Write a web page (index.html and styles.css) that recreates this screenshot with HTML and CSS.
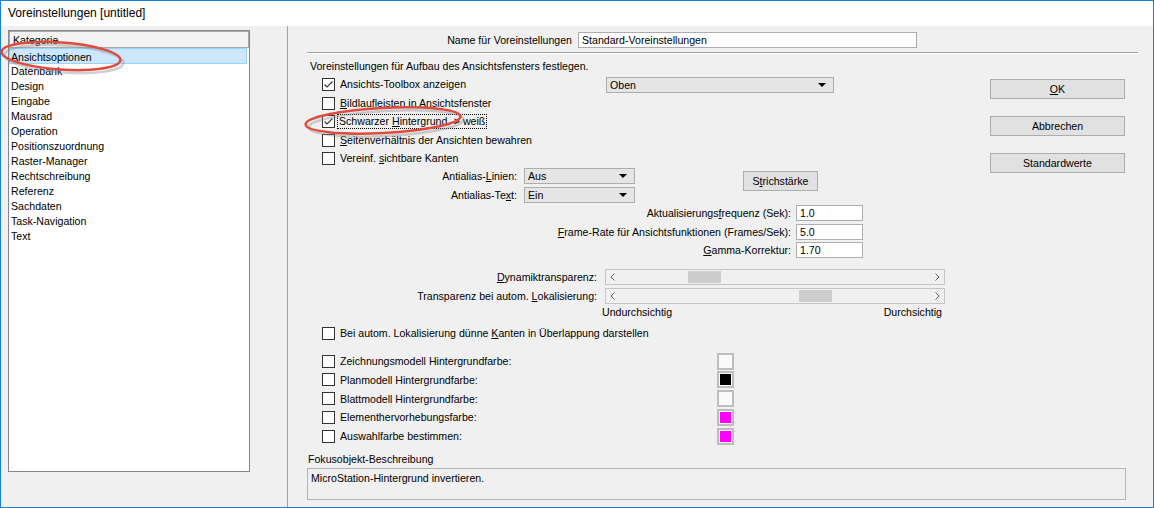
FILE: index.html
```html
<!DOCTYPE html>
<html>
    <head>
        <title>Voreinstellungen</title>
        <link rel="stylesheet" href="styles.css">
    </head>
    <body>
        <div class="window">
            <div class="titlebar">Voreinstellungen [untitled]</div>
            <div class="content">
                <div class="sidebar">
                    <div class="listbox">
                        <div class="list-header">Kategorie</div>
                        <div class="list-item selected">Ansichtsoptionen</div>
                        <div class="list-item">Datenbank</div>
                        <div class="list-item">Design</div>
                        <div class="list-item">Eingabe</div>
                        <div class="list-item">Mausrad</div>
                        <div class="list-item">Operation</div>
                        <div class="list-item">Positionszuordnung</div>
                        <div class="list-item">Raster-Manager</div>
                        <div class="list-item">Rechtschreibung</div>
                        <div class="list-item">Referenz</div>
                        <div class="list-item">Sachdaten</div>
                        <div class="list-item">Task-Navigation</div>
                        <div class="list-item">Text</div>
                    </div>
                </div>

                <div class="panel">
                    <div class="name-row">
                        <span class="name-label">Name für Voreinstellungen</span>
                        <div class="textbox name-box">Standard-Voreinstellungen</div>
                    </div>
                    <div class="rule"></div>

                    <div class="main">
                        <div class="options">
                            <p class="intro">Voreinstellungen für Aufbau des Ansichtsfensters festlegen.</p>

                            <div class="check-row toolbox-row">
                                <span class="cb"><svg width="11" height="11" viewBox="0 0 11 11"><path d="M1.5 5.5 L4 8 L9.5 2.5" fill="none" stroke="#333" stroke-width="1.1"/></svg></span>
                                <span class="cb-label">Ansichts-Toolbox anzeigen</span>
                                <div class="combo combo-wide">Oben<span class="arrow"></span></div>
                            </div>
                            <div class="check-row">
                                <span class="cb"></span>
                                <span class="cb-label"><u>B</u>ildlaufleisten in Ansichtsfenster</span>
                            </div>
                            <div class="check-row">
                                <span class="cb"><svg width="11" height="11" viewBox="0 0 11 11"><path d="M1.5 5.5 L4 8 L9.5 2.5" fill="none" stroke="#333" stroke-width="1.1"/></svg></span>
                                <span class="cb-label focused">Schwarzer <u>H</u>intergrund -&gt; weiß</span>
                            </div>
                            <div class="check-row">
                                <span class="cb"></span>
                                <span class="cb-label"><u>S</u>eitenverhältnis der Ansichten bewahren</span>
                            </div>
                            <div class="check-row">
                                <span class="cb"></span>
                                <span class="cb-label">Vereinf. <u>s</u>ichtbare Kanten</span>
                            </div>

                            <div class="aa-block">
                                <div class="aa-rows">
                                    <div class="field-row">
                                        <span class="aa-label">Antialias-<u>L</u>inien:</span>
                                        <div class="combo combo-small">Aus<span class="arrow"></span></div>
                                    </div>
                                    <div class="field-row">
                                        <span class="aa-label">Antialias-Te<u>x</u>t:</span>
                                        <div class="combo combo-small">Ein<span class="arrow"></span></div>
                                    </div>
                                </div>
                                <div class="button stroke-button">S<u>t</u>richstärke</div>
                            </div>

                            <div class="num-block">
                                <div class="field-row">
                                    <span class="num-label">Aktualisierungs<u>f</u>requenz (Sek):</span>
                                    <div class="textbox num-box">1.0</div>
                                </div>
                                <div class="field-row">
                                    <span class="num-label"><u>F</u>rame-Rate für Ansichtsfunktionen (Frames/Sek):</span>
                                    <div class="textbox num-box">5.0</div>
                                </div>
                                <div class="field-row">
                                    <span class="num-label"><u>G</u>amma-Korrektur:</span>
                                    <div class="textbox num-box">1.70</div>
                                </div>
                            </div>

                            <div class="scroll-block">
                                <div class="field-row">
                                    <span class="scroll-label"><u>D</u>ynamiktransparenz:</span>
                                    <div class="scrollbar">
                                        <span class="scroll-arrow"><svg width="5" height="8" viewBox="0 0 5 8"><path d="M4.5 0.5 L1 4 L4.5 7.5" fill="none" stroke="#606060" stroke-width="1"/></svg></span>
                                        <span class="thumb thumb-one"></span>
                                        <span class="scroll-arrow right"><svg width="5" height="8" viewBox="0 0 5 8"><path d="M0.5 0.5 L4 4 L0.5 7.5" fill="none" stroke="#606060" stroke-width="1"/></svg></span>
                                    </div>
                                </div>
                                <div class="field-row">
                                    <span class="scroll-label">Transparenz bei autom. <u>L</u>okalisierung:</span>
                                    <div class="scrollbar">
                                        <span class="scroll-arrow"><svg width="5" height="8" viewBox="0 0 5 8"><path d="M4.5 0.5 L1 4 L4.5 7.5" fill="none" stroke="#606060" stroke-width="1"/></svg></span>
                                        <span class="thumb thumb-two"></span>
                                        <span class="scroll-arrow right"><svg width="5" height="8" viewBox="0 0 5 8"><path d="M0.5 0.5 L4 4 L0.5 7.5" fill="none" stroke="#606060" stroke-width="1"/></svg></span>
                                    </div>
                                </div>
                            </div>
                            <div class="range-row">
                                <span>Undurchsichtig</span>
                                <span>Durchsichtig</span>
                            </div>

                            <div class="check-row thin-row">
                                <span class="cb"></span>
                                <span class="cb-label">Bei autom. Lokalisierung dünne <u>K</u>anten in Überlappung darstellen</span>
                            </div>

                            <div class="color-block">
                                <div class="color-row">
                                    <span class="cb"></span>
                                    <span class="color-label">Zeichnungsmodell Hintergrundfarbe:</span>
                                    <span class="swatch"><span class="fill-white"></span></span>
                                </div>
                                <div class="color-row">
                                    <span class="cb"></span>
                                    <span class="color-label">Planmodell Hintergrundfarbe:</span>
                                    <span class="swatch"><span class="fill-black"></span></span>
                                </div>
                                <div class="color-row">
                                    <span class="cb"></span>
                                    <span class="color-label">Blattmodell Hintergrundfarbe:</span>
                                    <span class="swatch"><span class="fill-white"></span></span>
                                </div>
                                <div class="color-row">
                                    <span class="cb"></span>
                                    <span class="color-label">Elementhervorhebungsfarbe:</span>
                                    <span class="swatch"><span class="fill-magenta"></span></span>
                                </div>
                                <div class="color-row">
                                    <span class="cb"></span>
                                    <span class="color-label">Auswahlfarbe bestimmen:</span>
                                    <span class="swatch"><span class="fill-magenta"></span></span>
                                </div>
                            </div>
                        </div>

                        <div class="buttons">
                            <div class="button"><u>O</u>K</div>
                            <div class="button">Abbrechen</div>
                            <div class="button">Standardwerte</div>
                        </div>
                    </div>

                    <p class="focus-title">Fokusobjekt-Beschreibung</p>
                    <div class="focus-box">MicroStation-Hintergrund invertieren.</div>
                </div>
            </div>

            <!-- red markers drawn over the screenshot -->
            <svg class="marks" width="1154" height="508" viewBox="0 0 1154 508">
                <ellipse cx="64" cy="59" rx="59.5" ry="13.5" transform="rotate(4 64 59)" fill="none" stroke="#8a8a8a" stroke-width="2.5" opacity="0.4"/>
                <ellipse cx="61" cy="56" rx="59.5" ry="13.5" transform="rotate(4 61 56)" fill="none" stroke="#e04a3f" stroke-width="2.5"/>
                <ellipse cx="386" cy="123.5" rx="77.5" ry="12.5" transform="rotate(-3 386 123.5)" fill="none" stroke="#8a8a8a" stroke-width="2.5" opacity="0.4"/>
                <ellipse cx="383" cy="120.5" rx="77.5" ry="12.5" transform="rotate(-3 383 120.5)" fill="none" stroke="#e04a3f" stroke-width="2.5"/>
            </svg>
        </div>
    </body>
</html>
```

FILE: styles.css
```css
body {
    margin: 0;
    font-family: "Liberation Sans", Arial, sans-serif;
    font-size: 10.6px;
    color: #000;
}

p {
    margin: 0;
}

.window {
    position: relative;
    width: 1154px;
    height: 508px;
    box-sizing: border-box;
    border: 1px solid #1a7fd4;
    display: flex;
    flex-direction: column;
    background-color: #f0f0f0;
}

.titlebar {
    height: 25px;
    line-height: 24px;
    padding-left: 7px;
    background-color: white;
    font-size: 12px;
}

.content {
    flex: 1;
    display: flex;
}

/* left category list */
.sidebar {
    width: 287px;
    box-sizing: border-box;
    padding: 4px 0 0 7px;
    border-right: 1px solid #a0a0a0;
}

.listbox {
    width: 242px;
    height: 442px;
    box-sizing: border-box;
    border: 1px solid #828790;
    background-color: white;
}

.list-header {
    height: 17px;
    line-height: 16px;
    box-sizing: border-box;
    padding-left: 3px;
    border: 1px solid #a9a9a9;
    background-color: #f3f3f3;
}

.list-item {
    height: 15px;
    line-height: 15px;
    padding-left: 2px;
}

.list-item.selected {
    height: 16px;
    line-height: 16px;
    padding-left: 1px;
    margin-right: 2px;
    border: 1px solid #99d1ff;
    background-color: #cce8ff;
    box-sizing: border-box;
}

/* right options panel */
.panel {
    flex: 1;
    padding-left: 19px;
}

.name-row {
    display: flex;
    align-items: center;
    margin-top: 6px;
    height: 16px;
}

.name-label {
    width: 265px;
    text-align: right;
    margin-right: 6px;
}

.textbox {
    height: 16px;
    line-height: 14px;
    box-sizing: border-box;
    padding-left: 3px;
    border: 1px solid #abadb3;
    background-color: white;
}

.name-box {
    width: 339px;
}

.rule {
    width: 831px;
    margin-top: 4px;
    border-top: 1px solid #a0a0a0;
    border-bottom: 1px solid white;
}

.main {
    display: flex;
}

.options {
    width: 683px;
    padding-top: 6px;
}

.intro {
    height: 13px;
    line-height: 13px;
    padding-left: 3px;
    margin-bottom: 2.25px;
}

.check-row {
    display: flex;
    align-items: center;
    height: 18.5px;
    padding-left: 15px;
}

.toolbox-row {
    width: 512px;
}

.cb {
    display: inline-flex;
    align-items: center;
    justify-content: center;
    width: 13px;
    height: 13px;
    box-sizing: border-box;
    border: 1px solid #333;
    background-color: white;
    flex-shrink: 0;
}

.cb-label {
    margin-left: 5px;
    line-height: 13px;
}

.cb-label.focused {
    margin-left: 3px;
    padding: 0 1px;
    outline: 1px dotted #000;
}

.combo {
    position: relative;
    height: 16px;
    line-height: 14px;
    box-sizing: border-box;
    padding-left: 3px;
    border: 1px solid #adadad;
    background-color: #e5e5e5;
}

.combo-wide {
    width: 228px;
    margin-left: auto;
}

.combo-small {
    width: 111px;
}

.arrow {
    position: absolute;
    right: 7px;
    top: 5px;
    width: 0;
    height: 0;
    border-left: 4px solid transparent;
    border-right: 4px solid transparent;
    border-top: 4px solid #000;
}

.field-row {
    display: flex;
    align-items: center;
    height: 16px;
}

.aa-block {
    display: flex;
    margin-top: 0.25px;
}

.aa-rows {
    display: flex;
    flex-direction: column;
    gap: 3px;
}

.aa-label {
    width: 210px;
    text-align: right;
    margin-right: 7px;
}

.button {
    width: 135px;
    height: 20px;
    line-height: 18px;
    box-sizing: border-box;
    text-align: center;
    border: 1px solid #adadad;
    background-color: #e1e1e1;
}

.stroke-button {
    width: 75px;
    margin-left: 108px;
    margin-top: 3px;
}

.num-block {
    display: flex;
    flex-direction: column;
    gap: 2.5px;
    margin-top: 2.25px;
}

.num-label {
    width: 484px;
    text-align: right;
    margin-right: 5px;
}

.num-box {
    width: 67px;
}

.scroll-block {
    display: flex;
    flex-direction: column;
    gap: 3px;
    margin-top: 11px;
}

.scroll-label {
    width: 290px;
    text-align: right;
    margin-right: 8px;
}

.scrollbar {
    display: flex;
    align-items: center;
    width: 340px;
    height: 16px;
    box-sizing: border-box;
    border: 1px solid #c4c4c4;
    background-color: #f0f0f0;
}

.scroll-arrow {
    display: flex;
    align-items: center;
    width: 17px;
    padding-left: 4px;
    box-sizing: border-box;
}

.scroll-arrow.right {
    margin-left: auto;
    justify-content: flex-end;
    padding-left: 0;
    padding-right: 4px;
}

.thumb {
    width: 33px;
    height: 12px;
    background-color: #cdcdcd;
}

.thumb-one {
    margin-left: 65px;
}

.thumb-two {
    margin-left: 176px;
}

.range-row {
    display: flex;
    justify-content: space-between;
    width: 340px;
    height: 14px;
    line-height: 14px;
    margin-top: 1px;
    padding-left: 295px;
}

.thin-row {
    margin-top: 5.25px;
}

.color-block {
    margin-top: 8.85px;
}

.color-row {
    display: flex;
    align-items: center;
    height: 18.75px;
    padding-left: 15px;
}

.color-label {
    width: 377px;
    margin-left: 5px;
}

.swatch {
    width: 17px;
    height: 17px;
    box-sizing: border-box;
    border: 2px solid #bdbdbd;
    padding: 1px;
    background-color: #fafafa;
}

.swatch span {
    display: block;
    width: 100%;
    height: 100%;
}

.fill-white {
    background-color: #fafafa;
}

.fill-black {
    background-color: #000;
}

.fill-magenta {
    background-color: #ff00ff;
}

.buttons {
    padding-top: 25px;
    display: flex;
    flex-direction: column;
    gap: 17px;
}

.focus-title {
    height: 13px;
    line-height: 13px;
    margin-top: 7px;
    padding-left: 1px;
}

.focus-box {
    width: 819px;
    height: 32px;
    box-sizing: border-box;
    margin-top: 2.5px;
    padding: 3px 0 0 3px;
    border: 1px solid #b4b4b4;
}

.marks {
    position: absolute;
    left: -1px;
    top: -1px;
    pointer-events: none;
}
```
